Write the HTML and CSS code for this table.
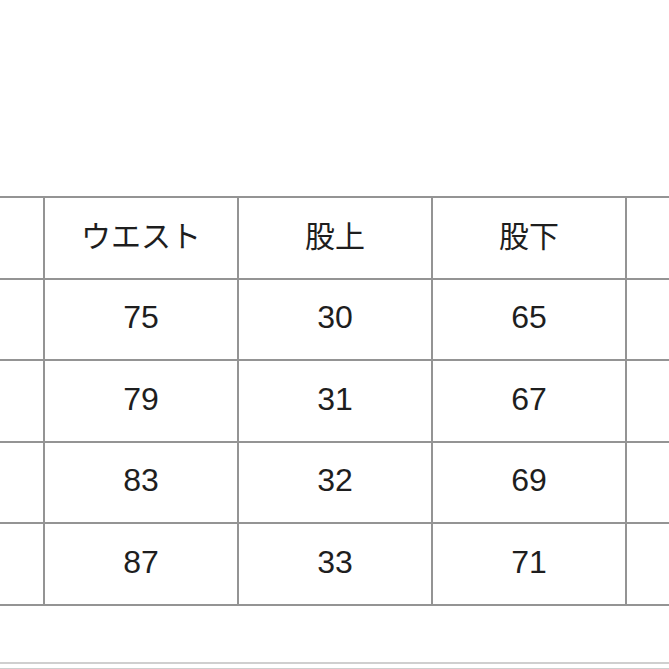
FILE: index.html
```
<!DOCTYPE html>
<html lang="ja">
<head>
<meta charset="utf-8">
<link rel="stylesheet" href="styles.css">
</head>
<body>
<div class="page">
  <div class="grid">
    <div class="cell"></div><div class="cell head">ウエスト</div><div class="cell head">股上</div><div class="cell head">股下</div><div class="cell"></div>
    <div class="cell"></div><div class="cell">75</div><div class="cell">30</div><div class="cell">65</div><div class="cell"></div>
    <div class="cell"></div><div class="cell">79</div><div class="cell">31</div><div class="cell">67</div><div class="cell"></div>
    <div class="cell"></div><div class="cell">83</div><div class="cell">32</div><div class="cell">69</div><div class="cell"></div>
    <div class="cell"></div><div class="cell">87</div><div class="cell">33</div><div class="cell">71</div><div class="cell"></div>
  </div>
  <div class="rule rule-a"></div>
  <div class="rule rule-b"></div>
</div>
</body>
</html>
```
FILE: styles.css
```
html, body {
  margin: 0;
  padding: 0;
  background: #ffffff;
}
.page {
  width: 669px;
  height: 669px;
  overflow: hidden;
  padding-top: 196px;
  box-sizing: border-box;
  font-family: "Liberation Sans", "Noto Sans CJK JP", sans-serif;
  color: #1e1e1e;
}
.grid {
  display: grid;
  grid-template-columns: 43px 192px 192px 192px 1fr;
  grid-auto-rows: 79.5px;
  gap: 2px;
  padding: 2px 0;
  background: #949494;
}
.cell {
  background: #ffffff;
  display: flex;
  align-items: center;
  justify-content: center;
  font-size: 32px;
  line-height: 1;
  padding-bottom: 4px;
  box-sizing: border-box;
}
.head {
  font-family: "Noto Sans CJK JP", sans-serif;
  font-size: 30px;
  padding-bottom: 8px;
}
.rule {
  height: 2px;
  background: #cfcfcf;
}
.rule-a {
  margin-top: 56px;
}
.rule-b {
  margin-top: 4px;
}
```
